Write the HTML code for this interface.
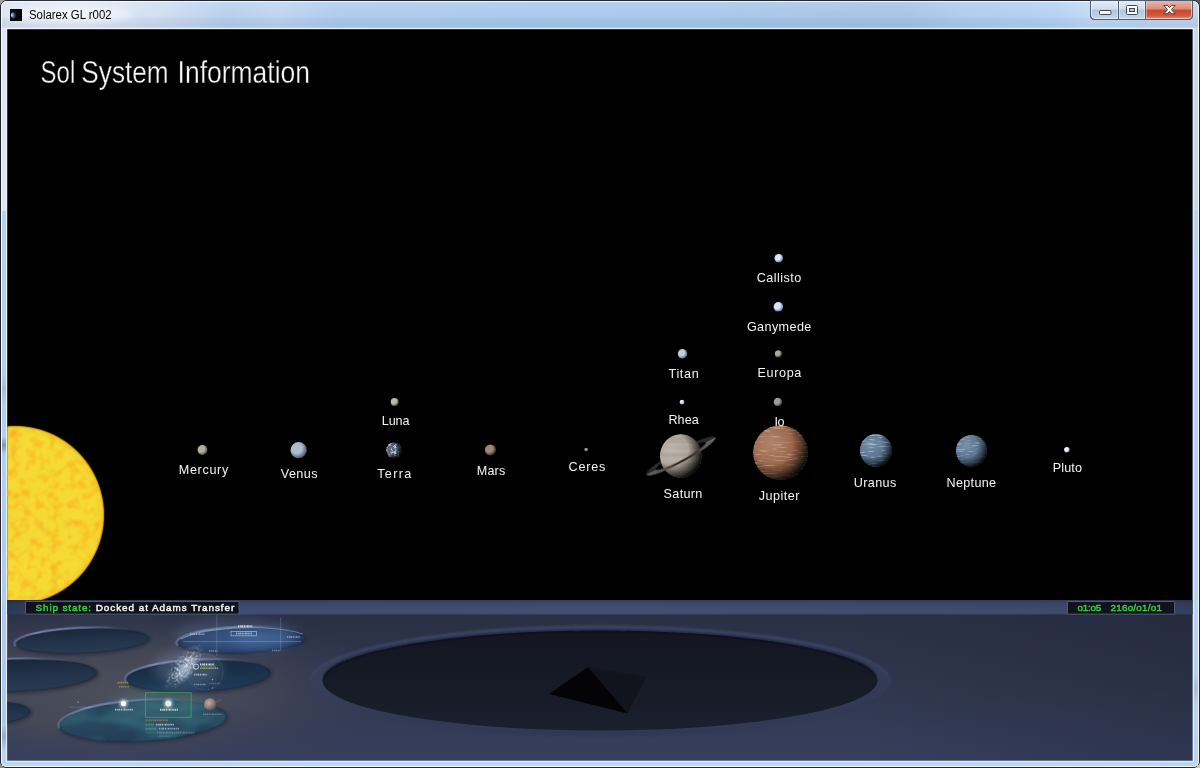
<!DOCTYPE html>
<html>
<head>
<meta charset="utf-8">
<title>Solarex GL r002</title>
<style>
html,body{margin:0;padding:0;background:#000;}
body{width:1200px;height:768px;overflow:hidden;font-family:"Liberation Sans",sans-serif;}
svg{display:block;}
text{font-family:"Liberation Sans",sans-serif;}
.lbl{font-size:12.6px;fill:#f4f4f4;}
.mono{font-family:"Liberation Mono",monospace;}
</style>
</head>
<body>
<svg width="1200" height="768" viewBox="0 0 1200 768">
<defs>
  <!-- FRAME GRADIENTS -->
  <linearGradient id="gTitle" x1="0" y1="0" x2="1" y2="0">
    <stop offset="0" stop-color="#dbe4f4"/>
    <stop offset="0.07" stop-color="#dfe7f5"/>
    <stop offset="0.13" stop-color="#d3e0f1"/>
    <stop offset="0.19" stop-color="#b8d1ee"/>
    <stop offset="0.23" stop-color="#c0d6f0"/>
    <stop offset="0.28" stop-color="#b0cdee"/>
    <stop offset="0.45" stop-color="#aacaee"/>
    <stop offset="0.6" stop-color="#a9c9ec"/>
    <stop offset="0.75" stop-color="#a7c5e6"/>
    <stop offset="0.8" stop-color="#aecdef"/>
    <stop offset="0.88" stop-color="#b6d3f2"/>
    <stop offset="0.91" stop-color="#c4dbf4"/>
    <stop offset="1" stop-color="#c0d6ee"/>
  </linearGradient>
  <linearGradient id="gTitleV" x1="0" y1="2" x2="0" y2="29" gradientUnits="userSpaceOnUse">
    <stop offset="0" stop-color="#ffffff" stop-opacity="0.12"/>
    <stop offset="0.45" stop-color="#ffffff" stop-opacity="0"/>
    <stop offset="0.6" stop-color="#4a6c98" stop-opacity="0.06"/>
    <stop offset="0.88" stop-color="#4a6c98" stop-opacity="0.14"/>
    <stop offset="1" stop-color="#ffffff" stop-opacity="0.15"/>
  </linearGradient>
  <clipPath id="clipContent"><rect x="7.3" y="29.3" width="1185.2" height="731.1"/></clipPath>
  <clipPath id="clipSpace"><rect x="7.3" y="29.3" width="1185.2" height="570.7"/></clipPath>
  <clipPath id="clipPanel"><rect x="7.3" y="600" width="1185.2" height="160.4"/></clipPath>
  <!--DEFS-->
<radialGradient id="gSun" cx="15" cy="515" r="89.5" gradientUnits="userSpaceOnUse">
 <stop offset="0" stop-color="#f5d933"/><stop offset="0.9" stop-color="#f5db34"/><stop offset="0.975" stop-color="#f3d22c"/><stop offset="0.99" stop-color="#c79a18"/><stop offset="1" stop-color="#5a4208" stop-opacity="0.6"/></radialGradient>
<filter id="fSun" x="0" y="0" width="1" height="1" color-interpolation-filters="sRGB">
 <feTurbulence type="fractalNoise" baseFrequency="0.1" numOctaves="2" seed="11" result="n"/>
 <feColorMatrix in="n" type="matrix" values="0 0 0 0 0.97  0 0 0 0 0.70  0 0 0 0 0.14  2.2 0 0 0 -0.98"/>
 <feComposite in2="SourceGraphic" operator="in"/>
</filter>
<clipPath id="clipSun"><circle cx="15" cy="515" r="88.3"/></clipPath>
<radialGradient id="g_mercury" cx="201.25" cy="448.75" r="6.50" gradientUnits="userSpaceOnUse"><stop offset="0" stop-color="#b4b09c"/><stop offset="0.5" stop-color="#b4b09c"/><stop offset="0.95" stop-color="#5a574e"/><stop offset="1" stop-color="#5a574e" stop-opacity="0.5"/></radialGradient>
<radialGradient id="g_venus" cx="296.65" cy="448.25" r="10.66" gradientUnits="userSpaceOnUse"><stop offset="0" stop-color="#aebdcb"/><stop offset="0.5" stop-color="#aebdcb"/><stop offset="0.95" stop-color="#4c5a6a"/><stop offset="1" stop-color="#4c5a6a" stop-opacity="0.5"/></radialGradient>
<radialGradient id="g_luna" cx="393.70" cy="401.00" r="5.20" gradientUnits="userSpaceOnUse"><stop offset="0" stop-color="#bcbcaa"/><stop offset="0.5" stop-color="#bcbcaa"/><stop offset="0.95" stop-color="#5a5a50"/><stop offset="1" stop-color="#5a5a50" stop-opacity="0.5"/></radialGradient>
<radialGradient id="g_mars" cx="489.10" cy="448.60" r="7.28" gradientUnits="userSpaceOnUse"><stop offset="0" stop-color="#9d8878"/><stop offset="0.5" stop-color="#9d8878"/><stop offset="0.95" stop-color="#3a2f2a"/><stop offset="1" stop-color="#3a2f2a" stop-opacity="0.5"/></radialGradient>
<radialGradient id="g_ceres" cx="585.73" cy="449.12" r="2.47" gradientUnits="userSpaceOnUse"><stop offset="0" stop-color="#9a9a9a"/><stop offset="0.5" stop-color="#9a9a9a"/><stop offset="0.95" stop-color="#484848"/><stop offset="1" stop-color="#484848" stop-opacity="0.5"/></radialGradient>
<radialGradient id="g_titan" cx="681.40" cy="352.70" r="6.24" gradientUnits="userSpaceOnUse"><stop offset="0" stop-color="#c0cfdc"/><stop offset="0.5" stop-color="#c0cfdc"/><stop offset="0.95" stop-color="#526270"/><stop offset="1" stop-color="#526270" stop-opacity="0.5"/></radialGradient>
<radialGradient id="g_rhea" cx="681.50" cy="401.60" r="3.12" gradientUnits="userSpaceOnUse"><stop offset="0" stop-color="#dce8f6"/><stop offset="0.5" stop-color="#dce8f6"/><stop offset="0.95" stop-color="#7080a0"/><stop offset="1" stop-color="#7080a0" stop-opacity="0.5"/></radialGradient>
<radialGradient id="g_callisto" cx="777.72" cy="257.12" r="5.59" gradientUnits="userSpaceOnUse"><stop offset="0" stop-color="#dce8fc"/><stop offset="0.5" stop-color="#dce8fc"/><stop offset="0.95" stop-color="#6c84ac"/><stop offset="1" stop-color="#6c84ac" stop-opacity="0.5"/></radialGradient>
<radialGradient id="g_ganymede" cx="777.20" cy="305.60" r="6.24" gradientUnits="userSpaceOnUse"><stop offset="0" stop-color="#d6e4fa"/><stop offset="0.5" stop-color="#d6e4fa"/><stop offset="0.95" stop-color="#6c84ac"/><stop offset="1" stop-color="#6c84ac" stop-opacity="0.5"/></radialGradient>
<radialGradient id="g_europa" cx="777.50" cy="353.00" r="4.68" gradientUnits="userSpaceOnUse"><stop offset="0" stop-color="#b0a890"/><stop offset="0.5" stop-color="#b0a890"/><stop offset="0.95" stop-color="#443f36"/><stop offset="1" stop-color="#443f36" stop-opacity="0.5"/></radialGradient>
<radialGradient id="g_io" cx="776.82" cy="401.03" r="5.59" gradientUnits="userSpaceOnUse"><stop offset="0" stop-color="#a39c94"/><stop offset="0.5" stop-color="#a39c94"/><stop offset="0.95" stop-color="#3e3a36"/><stop offset="1" stop-color="#3e3a36" stop-opacity="0.5"/></radialGradient>
<radialGradient id="g_pluto" cx="1066.20" cy="449.10" r="3.64" gradientUnits="userSpaceOnUse"><stop offset="0" stop-color="#e6f0ff"/><stop offset="0.5" stop-color="#e6f0ff"/><stop offset="0.95" stop-color="#7890b0"/><stop offset="1" stop-color="#7890b0" stop-opacity="0.5"/></radialGradient>
<!--/DEFS-->
<!--DEFS2-->
<filter id="fSoft" x="-0.3" y="-0.3" width="1.6" height="1.6"><feGaussianBlur stdDeviation="0.45"/></filter>
<filter id="fSoft2" x="-0.3" y="-0.3" width="1.6" height="1.6"><feGaussianBlur stdDeviation="0.6"/></filter>
<filter id="fStreakJ" x="0" y="0" width="1" height="1" color-interpolation-filters="sRGB">
 <feTurbulence type="fractalNoise" baseFrequency="0.07 1.1" numOctaves="2" seed="3" result="n"/>
 <feColorMatrix in="n" type="matrix" values="0 0 0 0 0.85  0 0 0 0 0.72  0 0 0 0 0.64  3.2 0 0 0 -1.72"/>
 <feComposite in2="SourceGraphic" operator="in"/>
</filter>
<filter id="fStreakU" x="0" y="0" width="1" height="1" color-interpolation-filters="sRGB">
 <feTurbulence type="fractalNoise" baseFrequency="0.09 1.1" numOctaves="2" seed="5" result="n"/>
 <feColorMatrix in="n" type="matrix" values="0 0 0 0 0.7  0 0 0 0 0.8  0 0 0 0 0.9  3.0 0 0 0 -1.6"/>
 <feComposite in2="SourceGraphic" operator="in"/>
</filter>
<filter id="fStreakN" x="0" y="0" width="1" height="1" color-interpolation-filters="sRGB">
 <feTurbulence type="fractalNoise" baseFrequency="0.09 1.1" numOctaves="2" seed="9" result="n"/>
 <feColorMatrix in="n" type="matrix" values="0 0 0 0 0.7  0 0 0 0 0.8  0 0 0 0 0.9  3.0 0 0 0 -1.6"/>
 <feComposite in2="SourceGraphic" operator="in"/>
</filter>
<filter id="fCloud" x="0" y="0" width="1" height="1" color-interpolation-filters="sRGB">
 <feTurbulence type="fractalNoise" baseFrequency="0.35" numOctaves="2" seed="4" result="n"/>
 <feColorMatrix in="n" type="matrix" values="0 0 0 0 0.76  0 0 0 0 0.8  0 0 0 0 0.85  4 0 0 0 -1.9"/>
 <feComposite in2="SourceGraphic" operator="in"/>
</filter>
<filter id="fBand" x="0" y="0" width="1" height="1" color-interpolation-filters="sRGB">
 <feTurbulence type="fractalNoise" baseFrequency="0.004 0.35" numOctaves="1" seed="2" result="n"/>
 <feColorMatrix in="n" type="matrix" values="0 0 0 0 0.45  0 0 0 0 0.40  0 0 0 0 0.36  0.5 0 0 0 -0.2"/>
 <feComposite in2="SourceGraphic" operator="in"/>
</filter>
<radialGradient id="gHi" cx="0.5" cy="0.5" r="0.5"><stop offset="0" stop-color="#fff" stop-opacity="1"/><stop offset="1" stop-color="#fff" stop-opacity="0"/></radialGradient>
<clipPath id="c_terra"><ellipse cx="394.2" cy="450.3" rx="8.1" ry="8.1"/></clipPath>
<radialGradient id="s_terra" cx="391.37" cy="448.68" r="11.74" gradientUnits="userSpaceOnUse"><stop offset="0" stop-color="#000" stop-opacity="0"/><stop offset="0.5" stop-color="#000" stop-opacity="0.04"/><stop offset="0.72" stop-color="#000" stop-opacity="0.55"/><stop offset="0.95" stop-color="#000" stop-opacity="0.95"/><stop offset="1" stop-color="#000" stop-opacity="1"/></radialGradient>
<clipPath id="cRingBack"><rect x="-45" y="-12" width="90" height="12"/></clipPath>
<clipPath id="cRingFront"><rect x="-45" y="0" width="90" height="12"/></clipPath>
<linearGradient id="gRing" x1="-40" y1="0" x2="40" y2="0" gradientUnits="userSpaceOnUse"><stop offset="0" stop-color="#62615d"/><stop offset="0.22" stop-color="#55544f"/><stop offset="0.36" stop-color="#3a342f"/><stop offset="0.5" stop-color="#2c2622"/><stop offset="0.7" stop-color="#3e3934"/><stop offset="0.8" stop-color="#5a5955"/><stop offset="1" stop-color="#6c6a65"/></linearGradient>
<clipPath id="c_saturn"><ellipse cx="680.8" cy="456.0" rx="20.9" ry="22.0"/></clipPath>
<radialGradient id="s_saturn" cx="672.44" cy="449.40" r="31.90" gradientUnits="userSpaceOnUse"><stop offset="0" stop-color="#000" stop-opacity="0"/><stop offset="0.5" stop-color="#000" stop-opacity="0.04"/><stop offset="0.72" stop-color="#000" stop-opacity="0.48"/><stop offset="0.95" stop-color="#000" stop-opacity="0.92"/><stop offset="1" stop-color="#000" stop-opacity="1"/></radialGradient>
<clipPath id="c_jupiter"><ellipse cx="780.4" cy="452.6" rx="27.4" ry="27.4"/></clipPath>
<radialGradient id="s_jupiter" cx="772.18" cy="444.38" r="39.73" gradientUnits="userSpaceOnUse"><stop offset="0" stop-color="#000" stop-opacity="0"/><stop offset="0.5" stop-color="#000" stop-opacity="0.04"/><stop offset="0.72" stop-color="#000" stop-opacity="0.42"/><stop offset="0.95" stop-color="#000" stop-opacity="0.92"/><stop offset="1" stop-color="#000" stop-opacity="1"/></radialGradient>
<clipPath id="c_uranus"><ellipse cx="876.0" cy="450.3" rx="16.2" ry="16.5"/></clipPath>
<radialGradient id="s_uranus" cx="871.14" cy="445.35" r="23.93" gradientUnits="userSpaceOnUse"><stop offset="0" stop-color="#000" stop-opacity="0"/><stop offset="0.5" stop-color="#000" stop-opacity="0.04"/><stop offset="0.72" stop-color="#000" stop-opacity="0.42"/><stop offset="0.95" stop-color="#000" stop-opacity="0.92"/><stop offset="1" stop-color="#000" stop-opacity="1"/></radialGradient>
<clipPath id="c_neptune"><ellipse cx="971.4" cy="450.8" rx="15.6" ry="16.0"/></clipPath>
<radialGradient id="s_neptune" cx="966.72" cy="446.00" r="23.20" gradientUnits="userSpaceOnUse"><stop offset="0" stop-color="#000" stop-opacity="0"/><stop offset="0.5" stop-color="#000" stop-opacity="0.04"/><stop offset="0.72" stop-color="#000" stop-opacity="0.42"/><stop offset="0.95" stop-color="#000" stop-opacity="0.92"/><stop offset="1" stop-color="#000" stop-opacity="1"/></radialGradient>
<!--/DEFS2-->
<!--DEFS3-->
<linearGradient id="gBtn" x1="0" y1="0" x2="0" y2="1">
 <stop offset="0" stop-color="#e6eef8"/><stop offset="0.45" stop-color="#cfdcec"/><stop offset="0.5" stop-color="#b4c6dc"/><stop offset="1" stop-color="#c3d5ea"/></linearGradient>
<linearGradient id="gClose" x1="0" y1="0" x2="0" y2="1">
 <stop offset="0" stop-color="#ecb4a6"/><stop offset="0.45" stop-color="#dc8a78"/><stop offset="0.5" stop-color="#c9462c"/><stop offset="0.8" stop-color="#d2583c"/><stop offset="1" stop-color="#e08e74"/></linearGradient>
<linearGradient id="gSide" x1="0" y1="30" x2="0" y2="762" gradientUnits="userSpaceOnUse">
 <stop offset="0" stop-color="#dde6f4"/><stop offset="0.246" stop-color="#dfe9f6"/><stop offset="0.248" stop-color="#b6d1ef"/><stop offset="0.47" stop-color="#b4d0ee"/><stop offset="0.49" stop-color="#a5bcd6"/><stop offset="0.51" stop-color="#b4d0ee"/><stop offset="0.555" stop-color="#b3cfee"/><stop offset="0.567" stop-color="#8796a8"/><stop offset="0.58" stop-color="#b3cfee"/><stop offset="0.95" stop-color="#aac8e8"/><stop offset="0.965" stop-color="#92accb"/><stop offset="0.985" stop-color="#b6d4f4"/><stop offset="1" stop-color="#b6d4f4"/></linearGradient>
<linearGradient id="gSideR" x1="0" y1="30" x2="0" y2="762" gradientUnits="userSpaceOnUse">
 <stop offset="0" stop-color="#c9d9ec"/><stop offset="0.246" stop-color="#c6d7ec"/><stop offset="0.248" stop-color="#b8d3f0"/><stop offset="0.88" stop-color="#b6d2f0"/><stop offset="0.9" stop-color="#a3bcd8"/><stop offset="0.92" stop-color="#b6d2f0"/><stop offset="1" stop-color="#b8d4f2"/></linearGradient>
<filter id="fGlow" x="-0.2" y="-1" width="1.4" height="3"><feGaussianBlur stdDeviation="5"/></filter>
<radialGradient id="gIcon" cx="11.6" cy="15.2" r="5.2" gradientUnits="userSpaceOnUse"><stop offset="0" stop-color="#d0dcd4"/><stop offset="0.3" stop-color="#7a96b4"/><stop offset="0.65" stop-color="#22324e"/><stop offset="1" stop-color="#04060a"/></radialGradient>
<!--/DEFS3-->
<!--DEFS4-->
<linearGradient id="gPanel" x1="0" y1="614" x2="0" y2="760" gradientUnits="userSpaceOnUse">
 <stop offset="0" stop-color="#2a3044"/><stop offset="0.5" stop-color="#30374d"/><stop offset="1" stop-color="#373f5e"/></linearGradient>
<linearGradient id="gPanelR" x1="850" y1="0" x2="1192" y2="0" gradientUnits="userSpaceOnUse"><stop offset="0" stop-color="#1a1e2e" stop-opacity="0"/><stop offset="1" stop-color="#1a1e2e" stop-opacity="0.3"/></linearGradient>
<radialGradient id="gPanelL" cx="110" cy="690" r="290" gradientUnits="userSpaceOnUse" gradientTransform="translate(110 690) scale(1 0.3) translate(-110 -690)">
 <stop offset="0" stop-color="#4d4f5b" stop-opacity="0.95"/><stop offset="0.45" stop-color="#484b58" stop-opacity="0.8"/><stop offset="0.8" stop-color="#3f4357" stop-opacity="0.3"/><stop offset="1" stop-color="#3a3f55" stop-opacity="0"/></radialGradient>
<linearGradient id="gStrip" x1="0" y1="600" x2="0" y2="615" gradientUnits="userSpaceOnUse">
 <stop offset="0" stop-color="#333d5a"/><stop offset="0.25" stop-color="#3e496d"/><stop offset="0.85" stop-color="#434f76"/><stop offset="1" stop-color="#3a4464"/></linearGradient>
<linearGradient id="gStripX" x1="8" y1="0" x2="1192" y2="0" gradientUnits="userSpaceOnUse">
 <stop offset="0" stop-color="#000" stop-opacity="0.28"/><stop offset="0.08" stop-color="#000" stop-opacity="0.05"/><stop offset="0.5" stop-color="#000" stop-opacity="0"/><stop offset="0.9" stop-color="#000" stop-opacity="0.05"/><stop offset="1" stop-color="#000" stop-opacity="0.2"/></linearGradient>
<linearGradient id="gHoleDark" x1="0" y1="0" x2="0" y2="1"><stop offset="0" stop-color="#1b2639"/><stop offset="0.45" stop-color="#213248"/><stop offset="1" stop-color="#293c53"/></linearGradient>
<linearGradient id="gHoleTeal" x1="0" y1="0" x2="0" y2="1"><stop offset="0" stop-color="#1f3a52"/><stop offset="0.5" stop-color="#27485f"/><stop offset="1" stop-color="#243a58"/></linearGradient>
<linearGradient id="gHoleNavy" x1="0" y1="0" x2="0" y2="1"><stop offset="0" stop-color="#16283f"/><stop offset="0.6" stop-color="#1d344f"/><stop offset="1" stop-color="#22395a"/></linearGradient>
<radialGradient id="gHoleBlue" cx="0.55" cy="0.45" r="0.6"><stop offset="0" stop-color="#294470"/><stop offset="0.6" stop-color="#223a62"/><stop offset="1" stop-color="#1a2a48"/></radialGradient>
<linearGradient id="gBig" x1="0" y1="630" x2="0" y2="731" gradientUnits="userSpaceOnUse"><stop offset="0" stop-color="#131620"/><stop offset="0.6" stop-color="#171b27"/><stop offset="1" stop-color="#1b2030"/></linearGradient>
<linearGradient id="gRimLight" x1="0" y1="0" x2="1" y2="0"><stop offset="0" stop-color="#6f7da6" stop-opacity="0.6"/><stop offset="0.2" stop-color="#7a88b2" stop-opacity="0.95"/><stop offset="0.6" stop-color="#6c7aa4" stop-opacity="0.8"/><stop offset="1" stop-color="#56628a" stop-opacity="0"/></linearGradient>
<linearGradient id="gBigRim" x1="0" y1="622" x2="0" y2="740" gradientUnits="userSpaceOnUse"><stop offset="0" stop-color="#47527a"/><stop offset="0.5" stop-color="#3a4262"/><stop offset="1" stop-color="#2e344c"/></linearGradient>
<filter id="fB1" x="-0.5" y="-0.5" width="2" height="2"><feGaussianBlur stdDeviation="1"/></filter>
<filter id="fB05" x="-0.5" y="-0.5" width="2" height="2"><feGaussianBlur stdDeviation="0.5"/></filter>
<filter id="fB03" x="-0.5" y="-0.5" width="2" height="2"><feGaussianBlur stdDeviation="0.35"/></filter>
<filter id="fB2" x="-0.5" y="-0.5" width="2" height="2"><feGaussianBlur stdDeviation="2.2"/></filter>
<filter id="fB6" x="-0.6" y="-0.6" width="2.2" height="2.2"><feGaussianBlur stdDeviation="6"/></filter>
<filter id="fB10" x="-0.6" y="-0.6" width="2.2" height="2.2"><feGaussianBlur stdDeviation="10"/></filter>
<filter id="fGalaxy" x="0" y="0" width="1" height="1" color-interpolation-filters="sRGB">
 <feTurbulence type="fractalNoise" baseFrequency="0.45" numOctaves="2" seed="8" result="n"/>
 <feColorMatrix in="n" type="matrix" values="0 0 0 0 0.86  0 0 0 0 0.9  0 0 0 0 0.96  3.5 0 0 0 -1.45"/>
 <feComposite in2="SourceGraphic" operator="in"/><feGaussianBlur stdDeviation="0.4"/>
</filter>
<radialGradient id="gGalMask" cx="0.5" cy="0.5" r="0.5"><stop offset="0" stop-color="#fff" stop-opacity="1"/><stop offset="0.45" stop-color="#fff" stop-opacity="0.7"/><stop offset="1" stop-color="#fff" stop-opacity="0"/></radialGradient>
<filter id="fNeb" x="0" y="0" width="1" height="1" color-interpolation-filters="sRGB">
 <feTurbulence type="fractalNoise" baseFrequency="0.025 0.06" numOctaves="2" seed="12" result="n"/>
 <feColorMatrix in="n" type="matrix" values="0 0 0 0 0.22  0 0 0 0 0.47  0 0 0 0 0.52  1.6 0 0 0 -0.62"/>
 <feComposite in2="SourceGraphic" operator="in"/>
</filter>
<radialGradient id="gBrown" cx="0.38" cy="0.36" r="0.7"><stop offset="0" stop-color="#d6bcb0"/><stop offset="0.5" stop-color="#a88a82"/><stop offset="1" stop-color="#54464c"/></radialGradient>
<clipPath id="cE4"><ellipse cx="0" cy="0" rx="83.5" ry="20.5"/></clipPath>
<!--/DEFS4-->
</defs>

<!-- WINDOW FRAME -->
<g id="frame">
<rect x="0" y="0" width="1200" height="768" fill="#22252c"/>
<rect x="0" y="0" width="5" height="5" fill="#a4a4a6"/><rect x="0" y="763" width="5" height="5" fill="#8c8c8e"/><rect x="1195" y="0" width="5" height="5" fill="#50545c"/><rect x="1195" y="763" width="5" height="5" fill="#c8ccd2"/>
<rect x="0.5" y="0.5" width="1199" height="767" rx="6.5" ry="6.5" fill="url(#gTitle)" stroke="#23262e" stroke-width="1"/>
<rect x="2" y="2" width="1196" height="26.5" fill="url(#gTitleV)"/>
<rect x="2" y="28" width="5" height="738" fill="url(#gSide)"/>
<rect x="1193" y="28" width="5" height="738" fill="url(#gSideR)"/>
<rect x="5" y="761" width="1190" height="5" fill="#b9d7f6"/>
<rect x="1.5" y="1.5" width="1197" height="765" rx="5.5" ry="5.5" fill="none" stroke="#f4f8fd" stroke-width="1"/>
<ellipse cx="70" cy="15" rx="62" ry="9" fill="#ffffff" opacity="0.55" filter="url(#fGlow)"/>
<rect x="6.6" y="28.6" width="1186.8" height="732.6" fill="none" stroke="#eef4fb" stroke-width="1.1" opacity="0.95"/>
<rect x="7.3" y="29.3" width="1185.2" height="731.1" fill="none" stroke="#4a5260" stroke-width="0.6" opacity="0.5"/>
<rect x="10" y="9" width="12" height="12" fill="#020304"/><circle cx="15" cy="15" r="4.2" fill="url(#gIcon)"/>
<g opacity="0.999"><text x="29" y="19" font-size="12" fill="#000" textLength="82.6" lengthAdjust="spacingAndGlyphs">Solarex GL r002</text></g>
<path d="M1090.5,0.5 V15 Q1090.5,19.5 1095,19.5 H1188 Q1192.5,19.5 1192.5,15 V0.5 Z" fill="url(#gBtn)" stroke="#4f5b6e" stroke-width="1"/>
<path d="M1145.5,1 V19 H1188 Q1192,19 1192,15 V1 Z" fill="url(#gClose)"/>
<path d="M1091.5,1.5 V15 Q1091.5,18.5 1095,18.5 H1188 Q1191.5,18.5 1191.5,15 V1.5" fill="none" stroke="#ffffff" stroke-opacity="0.55" stroke-width="1"/>
<path d="M1118.5,1 V19 M1145.5,1 V19" stroke="#4f5b6e" stroke-width="1" fill="none"/>
<path d="M1119.5,1.5 V18.5 M1117.5,1.5 V18.5 M1144.5,1.5 V18.5 M1146.5,1.5 V18.5" stroke="#ffffff" stroke-opacity="0.4" stroke-width="1" fill="none"/>
<path d="M1090.5,0.5 V15 Q1090.5,19.5 1095,19.5 H1188 Q1192.5,19.5 1192.5,15 V0.5" fill="none" stroke="#4f5b6e" stroke-width="1"/>
<rect x="1099.5" y="10.5" width="11.5" height="4" rx="1" fill="#fdfdfd" stroke="#3e4756" stroke-width="1"/>
<rect x="1126.5" y="5.5" width="11" height="9" rx="1" fill="#fdfdfd" stroke="#3e4756" stroke-width="1"/><rect x="1129.5" y="8.5" width="5" height="3" fill="#b9c9dd" stroke="#3e4756" stroke-width="1"/>
<path d="M1163.8,5.4 h3.7 l2,2.2 l2,-2.2 h3.7 l-3.8,4.2 l3.8,4.2 h-3.7 l-2,-2.2 l-2,2.2 h-3.7 l3.8,-4.2 z" fill="#ffffff" stroke="#4a2a26" stroke-width="0.9" stroke-linejoin="round"/>
</g>

<!-- SPACE -->
<rect x="7.3" y="29.3" width="1185.2" height="571" fill="#000"/>
<g id="space" clip-path="url(#clipSpace)">
  <!--SPACE-->
<g opacity="0.999" font-size="30.6" fill="#f6f6f6" stroke="#000" stroke-width="0.35"><text x="40.6" y="83.2" textLength="34.6" lengthAdjust="spacingAndGlyphs">Sol</text><text x="81.3" y="83.2" textLength="87.4" lengthAdjust="spacingAndGlyphs">System</text><text x="177.6" y="83.2" textLength="132.4" lengthAdjust="spacingAndGlyphs">Information</text></g>
<circle cx="15" cy="515" r="89.8" fill="url(#gSun)"/>
<g clip-path="url(#clipSun)"><rect x="0" y="420" width="110" height="190" fill="#fff" filter="url(#fSun)"/></g>
<circle cx="202.5" cy="450.0" r="5.0" fill="url(#g_mercury)" filter="url(#fSoft2)"/>
<circle cx="298.7" cy="450.3" r="8.2" fill="url(#g_venus)" filter="url(#fSoft2)"/>
<circle cx="394.7" cy="402.0" r="4.0" fill="url(#g_luna)" filter="url(#fSoft2)"/>
<circle cx="490.5" cy="450.0" r="5.6" fill="url(#g_mars)" filter="url(#fSoft2)"/>
<circle cx="586.2" cy="449.6" r="1.9" fill="url(#g_ceres)" filter="url(#fSoft2)"/>
<circle cx="682.6" cy="353.9" r="4.8" fill="url(#g_titan)" filter="url(#fSoft2)"/>
<circle cx="682.1" cy="402.2" r="2.4" fill="url(#g_rhea)" filter="url(#fSoft2)"/>
<circle cx="778.8" cy="258.2" r="4.3" fill="url(#g_callisto)" filter="url(#fSoft2)"/>
<circle cx="778.4" cy="306.8" r="4.8" fill="url(#g_ganymede)" filter="url(#fSoft2)"/>
<circle cx="778.4" cy="353.9" r="3.6" fill="url(#g_europa)" filter="url(#fSoft2)"/>
<circle cx="777.9" cy="402.1" r="4.3" fill="url(#g_io)" filter="url(#fSoft2)"/>
<circle cx="1066.9" cy="449.8" r="2.8" fill="url(#g_pluto)" filter="url(#fSoft2)"/>
<!--BIGPLANETS-->
<g filter="url(#fSoft2)"><g clip-path="url(#c_terra)">
<ellipse cx="394.2" cy="450.3" rx="8.1" ry="8.1" fill="#3e4c69"/>
<rect x="385.1" y="441.2" width="18.2" height="18.2" fill="#fff" filter="url(#fCloud)"/>
<ellipse cx="390.80" cy="448.36" rx="7.69" ry="7.69" fill="url(#gHi)" opacity="0.22"/>
<ellipse cx="394.2" cy="450.3" rx="8.6" ry="8.6" fill="url(#s_terra)"/>
</g></g>
<g transform="translate(680.8,456.0) rotate(-28.5)" filter="url(#fSoft)"><g clip-path="url(#cRingBack)"><path d="M-39.2,0 A39.2,6.3 0 1 0 39.2,0 A39.2,6.3 0 1 0 -39.2,0 Z M-28.5,0 A28.5,4.0 0 1 1 28.5,0 A28.5,4.0 0 1 1 -28.5,0 Z" fill="#2b2a29" fill-rule="evenodd"/></g></g>
<g filter="url(#fSoft2)"><g clip-path="url(#c_saturn)">
<ellipse cx="680.8" cy="456.0" rx="20.9" ry="22.0" fill="#b9afa5"/>
<rect x="658.9" y="433.0" width="43.8" height="46.0" fill="#fff" filter="url(#fBand)"/>
<ellipse cx="670.77" cy="448.08" rx="19.85" ry="20.90" fill="url(#gHi)" opacity="0.1"/>
<ellipse cx="680.8" cy="456.0" rx="21.4" ry="22.5" fill="url(#s_saturn)"/>
</g></g>
<g transform="translate(680.8,456.0) rotate(-28.5)" filter="url(#fSoft)"><g clip-path="url(#cRingFront)"><path d="M-39.2,0 A39.2,6.3 0 1 0 39.2,0 A39.2,6.3 0 1 0 -39.2,0 Z M-28.5,0 A28.5,4.0 0 1 1 28.5,0 A28.5,4.0 0 1 1 -28.5,0 Z" fill="url(#gRing)" fill-rule="evenodd"/></g></g>
<g filter="url(#fSoft2)"><g clip-path="url(#c_jupiter)">
<ellipse cx="780.4" cy="452.6" rx="27.4" ry="27.4" fill="#a0694b"/>
<rect x="752.0" y="424.2" width="56.8" height="56.8" fill="#fff" filter="url(#fStreakJ)"/>
<ellipse cx="770.54" cy="442.74" rx="26.03" ry="26.03" fill="url(#gHi)" opacity="0.18"/>
<ellipse cx="780.4" cy="452.6" rx="27.9" ry="27.9" fill="url(#s_jupiter)"/>
</g></g>
<g filter="url(#fSoft2)"><g clip-path="url(#c_uranus)">
<ellipse cx="876.0" cy="450.3" rx="16.2" ry="16.5" fill="#5b7794"/>
<rect x="858.8" y="432.8" width="34.4" height="35.0" fill="#fff" filter="url(#fStreakU)"/>
<ellipse cx="870.17" cy="444.36" rx="15.39" ry="15.67" fill="url(#gHi)" opacity="0.18"/>
<ellipse cx="876.0" cy="450.3" rx="16.7" ry="17.0" fill="url(#s_uranus)"/>
</g></g>
<g filter="url(#fSoft2)"><g clip-path="url(#c_neptune)">
<ellipse cx="971.4" cy="450.8" rx="15.6" ry="16.0" fill="#5b7794"/>
<rect x="954.8" y="433.8" width="33.2" height="34.0" fill="#fff" filter="url(#fStreakN)"/>
<ellipse cx="965.78" cy="445.04" rx="14.82" ry="15.20" fill="url(#gHi)" opacity="0.18"/>
<ellipse cx="971.4" cy="450.8" rx="16.1" ry="16.5" fill="url(#s_neptune)"/>
</g></g>
<!--/BIGPLANETS-->
<g opacity="0.999">
<text class="lbl" x="178.7" y="474.2" textLength="49.6" lengthAdjust="spacing">Mercury</text>
<text class="lbl" x="280.8" y="477.8" textLength="36.7" lengthAdjust="spacing">Venus</text>
<text class="lbl" x="381.7" y="425.0" textLength="27.8" lengthAdjust="spacing">Luna</text>
<text class="lbl" x="377.2" y="478.0" textLength="34.1" lengthAdjust="spacing">Terra</text>
<text class="lbl" x="476.7" y="475.0" textLength="28.6" lengthAdjust="spacing">Mars</text>
<text class="lbl" x="568.6" y="470.7" textLength="36.6" lengthAdjust="spacing">Ceres</text>
<text class="lbl" x="668.5" y="377.6" textLength="30.2" lengthAdjust="spacing">Titan</text>
<text class="lbl" x="668.5" y="423.8" textLength="30.2" lengthAdjust="spacing">Rhea</text>
<text class="lbl" x="663.6" y="498.0" textLength="38.7" lengthAdjust="spacing">Saturn</text>
<text class="lbl" x="756.7" y="281.7" textLength="44.6" lengthAdjust="spacing">Callisto</text>
<text class="lbl" x="746.9" y="331.0" textLength="64.4" lengthAdjust="spacing">Ganymede</text>
<text class="lbl" x="757.6" y="377.0" textLength="43.7" lengthAdjust="spacing">Europa</text>
<text class="lbl" x="774.5" y="425.6" textLength="9.9" lengthAdjust="spacing">Io</text>
<text class="lbl" x="758.7" y="499.7" textLength="40.7" lengthAdjust="spacing">Jupiter</text>
<text class="lbl" x="853.7" y="486.7" textLength="42.6" lengthAdjust="spacing">Uranus</text>
<text class="lbl" x="946.6" y="486.7" textLength="49.4" lengthAdjust="spacing">Neptune</text>
<text class="lbl" x="1052.8" y="471.5" textLength="29.2" lengthAdjust="spacing">Pluto</text>
</g>
<!--/SPACE-->
</g>

<!-- PANEL -->
<g id="panel" clip-path="url(#clipPanel)">
<rect x="7" y="600" width="1186" height="161" fill="url(#gPanel)"/>
<rect x="7" y="600" width="700" height="161" fill="url(#gPanelL)"/>
<rect x="850" y="614" width="342" height="147" fill="url(#gPanelR)"/>
<rect x="7" y="600" width="1186" height="14.6" fill="url(#gStrip)"/><rect x="7" y="600" width="1186" height="14.6" fill="url(#gStripX)"/>
<ellipse cx="600" cy="681" rx="291" ry="55.5" fill="url(#gBigRim)" opacity="0.45" filter="url(#fB1)"/>
<path d="M312,676 A289,54 0 0 1 888,676" fill="none" stroke="#56628c" stroke-opacity="0.26" stroke-width="1.6" filter="url(#fB1)"/>
<ellipse cx="600" cy="680.5" rx="277.5" ry="50" fill="url(#gBig)"/>
<path d="M324,676 A277,49.5 0 0 1 876,676" fill="none" stroke="#0c0e16" stroke-opacity="0.5" stroke-width="2" filter="url(#fB1)"/>
<path d="M588,667 L646,677 L627.6,713.6 Z" fill="#11141d"/>
<path d="M549,694 L588,667 L627.6,713.6 Z" fill="#040407"/>
<g transform="translate(82.5,641) rotate(-2.4)">
<ellipse cx="0.8" cy="1.2" rx="68.4" ry="14.2" fill="#2a2e3e" opacity="0.55" filter="url(#fB1)"/>
<ellipse cx="0" cy="0" rx="66.2" ry="12.6" fill="url(#gHoleDark)"/>

<ellipse cx="0" cy="0" rx="65.8" ry="12.2" fill="none" stroke="#141c2c" stroke-opacity="0.35" stroke-width="1.6" filter="url(#fB05)"/>
<path d="M-66.8,2.5 A66.8,13.2 0 0 1 52.96000000000001,-7.811999999999999" fill="none" stroke="url(#gRimLight)" stroke-width="2.2" filter="url(#fB05)"/>
</g>
<g transform="translate(14,675.6) rotate(-2.0)">
<ellipse cx="0.8" cy="1.2" rx="85.2" ry="17.900000000000002" fill="#2a2e3e" opacity="0.55" filter="url(#fB1)"/>
<ellipse cx="0" cy="0" rx="83" ry="16.3" fill="url(#gHoleDark)"/>

<ellipse cx="0" cy="0" rx="82.6" ry="15.9" fill="none" stroke="#141c2c" stroke-opacity="0.35" stroke-width="1.6" filter="url(#fB05)"/>
<path d="M-83.6,2.5 A83.6,16.900000000000002 0 0 1 66.4,-10.106" fill="none" stroke="url(#gRimLight)" stroke-width="2.2" filter="url(#fB05)"/>
</g>
<g transform="translate(-24,713.3) rotate(-2.0)">
<ellipse cx="0.8" cy="1.2" rx="56.2" ry="14.4" fill="#2a2e3e" opacity="0.55" filter="url(#fB1)"/>
<ellipse cx="0" cy="0" rx="54" ry="12.8" fill="url(#gHoleDark)"/>

<ellipse cx="0" cy="0" rx="53.6" ry="12.4" fill="none" stroke="#141c2c" stroke-opacity="0.35" stroke-width="1.6" filter="url(#fB05)"/>
<path d="M-54.6,2.5 A54.6,13.4 0 0 1 43.2,-7.936" fill="none" stroke="url(#gRimLight)" stroke-width="2.2" filter="url(#fB05)"/>
</g>
<g transform="translate(143,721) rotate(-3.2)">
<ellipse cx="0.8" cy="1.2" rx="85.7" ry="22.1" fill="#2a2e3e" opacity="0.55" filter="url(#fB1)"/>
<ellipse cx="0" cy="0" rx="83.5" ry="20.5" fill="url(#gHoleTeal)"/>
<rect x="-90" y="-24" width="180" height="48" fill="#fff" filter="url(#fNeb)" clip-path="url(#cE4)"/>
<ellipse cx="0" cy="0" rx="83.1" ry="20.1" fill="none" stroke="#141c2c" stroke-opacity="0.35" stroke-width="1.6" filter="url(#fB05)"/>
<path d="M-84.1,2.5 A84.1,21.1 0 0 1 66.8,-12.709999999999999" fill="none" stroke="url(#gRimLight)" stroke-width="2.2" filter="url(#fB05)"/>
</g>
<g transform="translate(198.4,676) rotate(-2.6)">
<ellipse cx="0.8" cy="1.2" rx="74.2" ry="17.6" fill="#2a2e3e" opacity="0.55" filter="url(#fB1)"/>
<ellipse cx="0" cy="0" rx="72" ry="16" fill="url(#gHoleNavy)"/>

<ellipse cx="0" cy="0" rx="71.6" ry="15.6" fill="none" stroke="#141c2c" stroke-opacity="0.35" stroke-width="1.6" filter="url(#fB05)"/>
<path d="M-72.6,2.5 A72.6,16.6 0 0 1 57.6,-9.92" fill="none" stroke="url(#gRimLight)" stroke-width="2.2" filter="url(#fB05)"/>
</g>
<g transform="translate(241.8,640.6) rotate(-2.2)">
<ellipse cx="0.8" cy="1.2" rx="65.9" ry="14.799999999999999" fill="#2a2e3e" opacity="0.55" filter="url(#fB1)"/>
<ellipse cx="0" cy="0" rx="63.7" ry="13.2" fill="url(#gHoleBlue)"/>

<ellipse cx="0" cy="0" rx="63.300000000000004" ry="12.799999999999999" fill="none" stroke="#141c2c" stroke-opacity="0.35" stroke-width="1.6" filter="url(#fB05)"/>
<path d="M-64.3,2.5 A64.3,13.799999999999999 0 0 1 50.96000000000001,-8.184" fill="none" stroke="url(#gRimLight)" stroke-width="2.2" filter="url(#fB05)"/>
</g>
<!--HOLO-->
<ellipse cx="236" cy="636" rx="62" ry="17" fill="#6f97c8" opacity="0.22" filter="url(#fB6)"/>
<ellipse cx="188" cy="668" rx="34" ry="18" fill="#9db4d0" opacity="0.25" filter="url(#fB6)"/>
<ellipse cx="160" cy="706" rx="52" ry="14" fill="#5fa0a8" opacity="0.28" filter="url(#fB6)"/>
<ellipse cx="262" cy="640" rx="30" ry="9" fill="#5f8fd0" opacity="0.25" filter="url(#fB6)"/>
<path d="M216.8,615 V656 M280.6,617 V651" stroke="#b8dcd8" stroke-opacity="0.26" stroke-width="0.8" fill="none"/>
<path d="M183,641.6 L301,641.6" stroke="#b8dcd8" stroke-opacity="0.36" stroke-width="0.8" fill="none"/>
<rect x="231" y="631.4" width="25.6" height="4.4" fill="none" stroke="#e0e8f0" stroke-opacity="0.7" stroke-width="0.7"/>
<path d="M236,633.60 H252" stroke="#ffffff" stroke-width="1.50" stroke-dasharray="1.3 0.6 0.9 0.5 1.7 0.7" opacity="0.60" fill="none"/>
<path d="M238,626.20 H252.5" stroke="#ffffff" stroke-width="1.88" stroke-dasharray="1.3 0.6 0.9 0.5 1.7 0.7" opacity="0.68" fill="none"/>
<path d="M190,634.20 H205" stroke="#ffffff" stroke-width="1.62" stroke-dasharray="1.3 0.6 0.9 0.5 1.7 0.7" opacity="0.48" fill="none"/>
<path d="M287,637.00 H300" stroke="#ffffff" stroke-width="1.62" stroke-dasharray="1.3 0.6 0.9 0.5 1.7 0.7" opacity="0.48" fill="none"/>
<path d="M209,651.00 H218" stroke="#ffffff" stroke-width="1.50" stroke-dasharray="1.3 0.6 0.9 0.5 1.7 0.7" opacity="0.36" fill="none"/>
<path d="M272,650.50 H280" stroke="#ffffff" stroke-width="1.50" stroke-dasharray="1.3 0.6 0.9 0.5 1.7 0.7" opacity="0.36" fill="none"/>
<path d="M181,639 Q200,629.5 243,627.6 Q280,626.6 303,634" fill="none" stroke="#c4d2ee" stroke-opacity="0.4" stroke-width="1.2" filter="url(#fB05)"/>
<g transform="translate(184,667) rotate(-50)"><ellipse cx="0" cy="0" rx="29" ry="12" fill="url(#gGalMask)" filter="url(#fGalaxy)"/></g>
<g transform="translate(186,668) rotate(-52)"><ellipse cx="0" cy="0" rx="13" ry="5.5" fill="#e8eef8" opacity="0.5" filter="url(#fB2)"/></g>
<circle cx="205" cy="672" r="18" fill="none" stroke="#c8d0c0" stroke-opacity="0.14" stroke-width="0.8"/>
<circle cx="196" cy="666.6" r="2.6" fill="none" stroke="#ffffff" stroke-opacity="0.8" stroke-width="0.8"/>
<path d="M200,664.60 H214.5" stroke="#ffffff" stroke-width="2.00" stroke-dasharray="1.3 0.6 0.9 0.5 1.7 0.7" opacity="0.76" fill="none"/>
<path d="M200,668.20 H218" stroke="#d8e070" stroke-width="1.62" stroke-dasharray="1.3 0.6 0.9 0.5 1.7 0.7" opacity="0.64" fill="none"/>
<path d="M201,666.50 H216" stroke="#b8c860" stroke-width="1.25" stroke-dasharray="1.3 0.6 0.9 0.5 1.7 0.7" opacity="0.32" fill="none"/>
<path d="M194,674.60 H207" stroke="#ffffff" stroke-width="1.62" stroke-dasharray="1.3 0.6 0.9 0.5 1.7 0.7" opacity="0.56" fill="none"/>
<path d="M194,684.50 H206" stroke="#ffffff" stroke-width="1.50" stroke-dasharray="1.3 0.6 0.9 0.5 1.7 0.7" opacity="0.36" fill="none"/>
<path d="M209,683.60 H220" stroke="#ffffff" stroke-width="1.50" stroke-dasharray="1.3 0.6 0.9 0.5 1.7 0.7" opacity="0.24" fill="none"/>
<circle cx="212.5" cy="679.6" r="0.8" fill="#fff" opacity="0.5"/><circle cx="212.5" cy="688" r="0.7" fill="#fff" opacity="0.4"/>
<path d="M117.5,682.60 H129" stroke="#d0aa3a" stroke-width="1.62" stroke-dasharray="1.3 0.6 0.9 0.5 1.7 0.7" opacity="0.64" fill="none"/>
<path d="M119,686.80 H129" stroke="#d0aa3a" stroke-width="1.62" stroke-dasharray="1.3 0.6 0.9 0.5 1.7 0.7" opacity="0.56" fill="none"/>
<circle cx="123.5" cy="703.5" r="4.6" fill="#dfeffa" opacity="0.5" filter="url(#fB1)"/><circle cx="123.5" cy="703.5" r="2.6" fill="#ffffff" filter="url(#fB03)"/>
<circle cx="168.3" cy="703.6" r="5" fill="#dfeffa" opacity="0.5" filter="url(#fB1)"/><circle cx="168.3" cy="703.6" r="3" fill="#ffffff" filter="url(#fB03)"/>
<path d="M204,708 L221,699.5" stroke="#a08888" stroke-opacity="0.45" stroke-width="0.9"/>
<circle cx="210.2" cy="704.4" r="6.2" fill="url(#gBrown)" opacity="0.85" filter="url(#fB05)"/>
<path d="M115,709.70 H133" stroke="#ffffff" stroke-width="1.75" stroke-dasharray="1.3 0.6 0.9 0.5 1.7 0.7" opacity="0.60" fill="none"/>
<path d="M160,709.70 H178" stroke="#ffffff" stroke-width="2.12" stroke-dasharray="1.3 0.6 0.9 0.5 1.7 0.7" opacity="0.76" fill="none"/>
<path d="M203,714.20 H222" stroke="#ffffff" stroke-width="1.62" stroke-dasharray="1.3 0.6 0.9 0.5 1.7 0.7" opacity="0.28" fill="none"/>
<path d="M78,700.6 l1,2.4 h-2 z" fill="#c0c4d0" opacity="0.45"/>
<path d="M69,707.20 H92" stroke="#b0b4c4" stroke-width="1.62" stroke-dasharray="1.3 0.6 0.9 0.5 1.7 0.7" opacity="0.24" fill="none"/>
<rect x="145.4" y="692.7" width="45.7" height="24.6" fill="#3a7a6a" fill-opacity="0.12" stroke="#3fae58" stroke-opacity="0.85" stroke-width="0.9"/>
<path d="M145.5,720.20 H168" stroke="#c87a3a" stroke-width="1.88" stroke-dasharray="1.3 0.6 0.9 0.5 1.7 0.7" opacity="0.68" fill="none"/>
<path d="M145.5,724.60 H154" stroke="#48c060" stroke-width="1.88" stroke-dasharray="1.3 0.6 0.9 0.5 1.7 0.7" opacity="0.68" fill="none"/>
<path d="M156,724.60 H174" stroke="#ffffff" stroke-width="1.75" stroke-dasharray="1.3 0.6 0.9 0.5 1.7 0.7" opacity="0.60" fill="none"/>
<path d="M145.5,728.70 H157" stroke="#48c060" stroke-width="1.88" stroke-dasharray="1.3 0.6 0.9 0.5 1.7 0.7" opacity="0.56" fill="none"/>
<path d="M159,728.70 H179" stroke="#ffffff" stroke-width="1.75" stroke-dasharray="1.3 0.6 0.9 0.5 1.7 0.7" opacity="0.48" fill="none"/>
<path d="M145.5,732.60 H155" stroke="#48a860" stroke-width="1.75" stroke-dasharray="1.3 0.6 0.9 0.5 1.7 0.7" opacity="0.36" fill="none"/>
<path d="M157,732.60 H194" stroke="#ffffff" stroke-width="1.62" stroke-dasharray="1.3 0.6 0.9 0.5 1.7 0.7" opacity="0.24" fill="none"/>
<path d="M145.5,736.20 H155" stroke="#48a060" stroke-width="1.62" stroke-dasharray="1.3 0.6 0.9 0.5 1.7 0.7" opacity="0.20" fill="none"/>
<path d="M157,736.20 H170" stroke="#ffffff" stroke-width="1.62" stroke-dasharray="1.3 0.6 0.9 0.5 1.7 0.7" opacity="0.14" fill="none"/>
<!--/HOLO-->
<rect x="25.5" y="601.5" width="213.5" height="12.6" fill="#10131b" stroke="#4f5975" stroke-width="1"/>
<rect x="1067.5" y="601.5" width="107" height="12.6" fill="#10131b" stroke="#4f5975" stroke-width="1"/>
<g opacity="0.999" font-size="9.9" stroke-width="0.45" paint-order="stroke">
<text x="35.6" y="611" fill="#36d044" stroke="#36d044" textLength="55.4" lengthAdjust="spacing">Ship state:</text>
<text x="95.7" y="611" fill="#f4f4f4" stroke="#f4f4f4" textLength="138.6" lengthAdjust="spacing">Docked at Adams Transfer</text>
<text x="1077.4" y="611" fill="#36d044" stroke="#36d044" textLength="23.9" lengthAdjust="spacing">o1:o5</text>
<text x="1110.5" y="611" fill="#36d044" stroke="#36d044" textLength="51.4" lengthAdjust="spacing">216o/o1/o1</text>
</g>
</g>
</svg>
</body>
</html>
